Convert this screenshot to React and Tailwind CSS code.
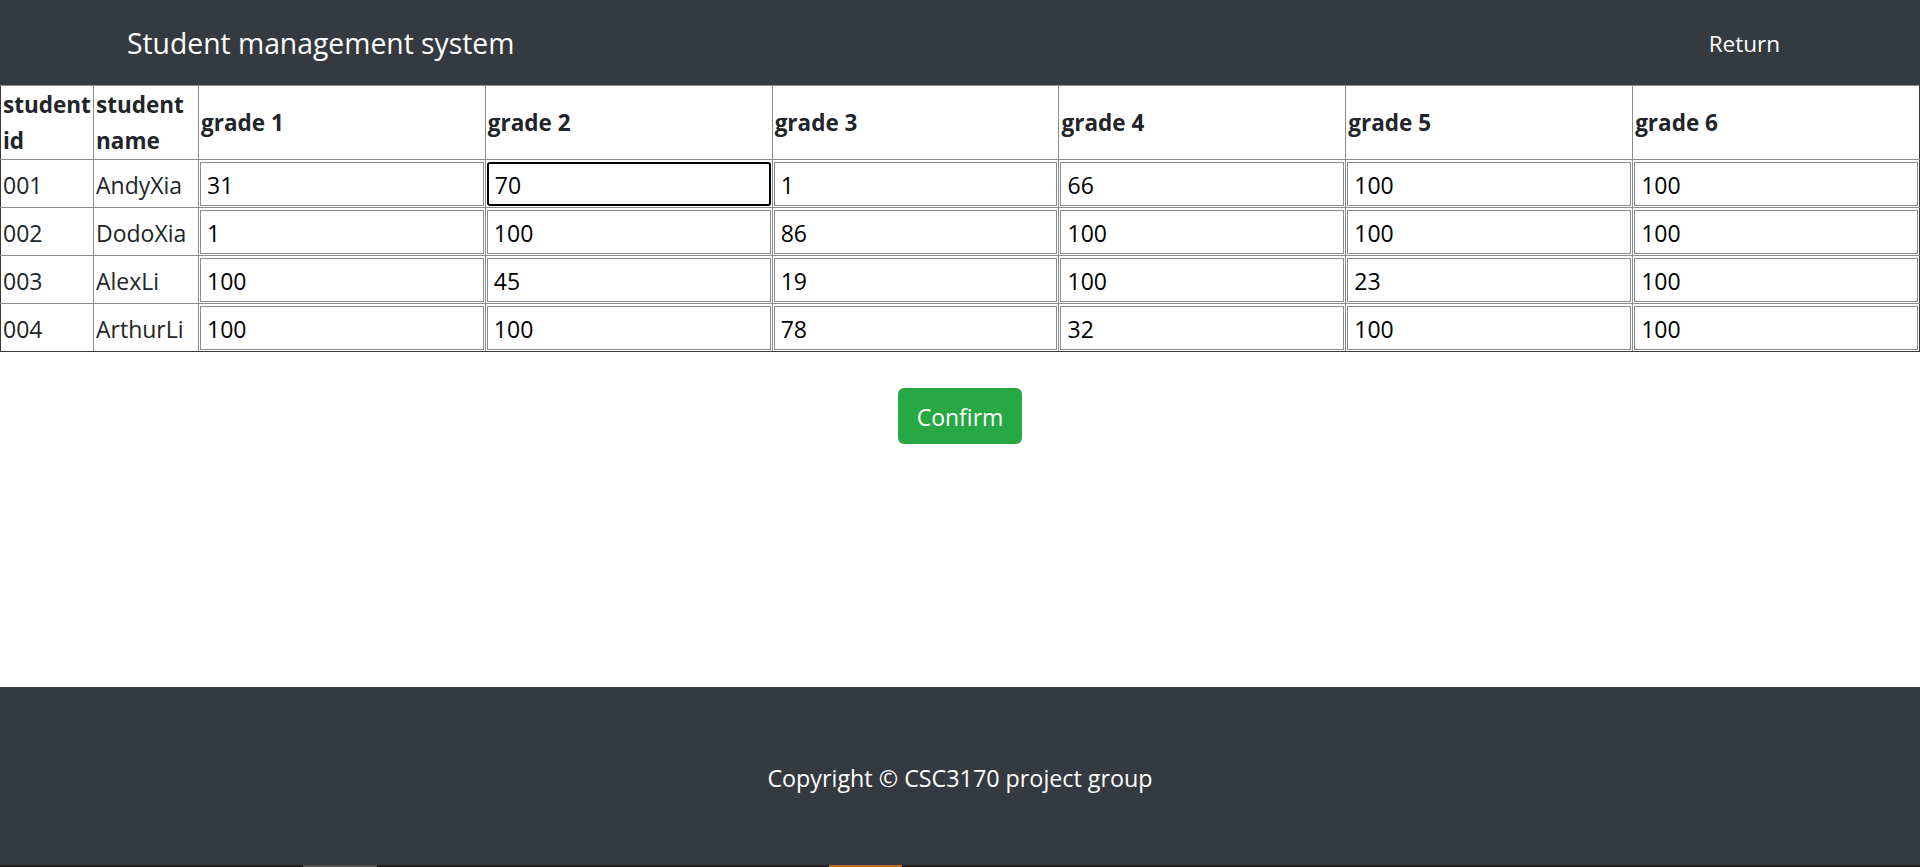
import { useEffect, useRef } from "react";

const students = [
	{ id: "001", name: "AndyXia", grades: ["31", "70", "1", "66", "100", "100"] },
	{ id: "002", name: "DodoXia", grades: ["1", "100", "86", "100", "100", "100"] },
	{ id: "003", name: "AlexLi", grades: ["100", "45", "19", "100", "23", "100"] },
	{ id: "004", name: "ArthurLi", grades: ["100", "100", "78", "32", "100", "100"] },
];

const font = "font-['Segoe_UI','Open_Sans','Noto_Sans',sans-serif]";

const Navbar = () => (
	<header className="h-[85px] bg-[#343a40] flex items-center justify-between pl-[127px] pr-[140px]">
		<span className="text-[28.3px] leading-[45px] text-white pt-[2px]">Student management system</span>
		<a href="#" className="text-[22.5px] leading-[36px] text-white pt-[2px]">
			Return
		</a>
	</header>
);

const GradeInput = ({ value, active }) => {
	const ref = useRef(null);

	useEffect(() => {
		if (active && ref.current) {
			ref.current.focus();
			ref.current.setSelectionRange(value.length, value.length);
		}
	}, [active, value]);

	return (
		<input
			ref={ref}
			type="text"
			defaultValue={value}
			className={`block w-full h-[44px] px-[6px] pt-[2px] text-[23px] text-black bg-white outline-none ${font} ${
				active
					? "border-2 border-black rounded-[3px]"
					: "border border-[#8a8a8a]"
			}`}
		/>
	);
};

const GradeTable = () => {
	const cell = "border border-[#8c8c8c] px-[2px] text-left align-middle";

	return (
		<table className="w-full table-fixed border-collapse text-[23px] leading-[36px] text-[#212529]">
			<colgroup>
				<col className="w-[93px]" />
				<col className="w-[105px]" />
				<col />
				<col />
				<col />
				<col />
				<col />
				<col />
			</colgroup>
			<thead>
				<tr className="h-[74px] text-[22.5px]">
					<th className={`${cell} border-l-[#3a3a3a] font-bold`}>
						student
						<br />
						id
					</th>
					<th className={`${cell} font-bold`}>
						student
						<br />
						name
					</th>
					{[1, 2, 3, 4, 5, 6].map((n) => (
						<th
							key={n}
							className={`${cell} font-bold ${n === 6 ? "border-r-[#3a3a3a]" : ""}`}
						>
							grade {n}
						</th>
					))}
				</tr>
			</thead>
			<tbody>
				{students.map((s, r) => {
					const last = r === students.length - 1;
					const bottom = last ? "border-b-[#3a3a3a]" : "";
					return (
						<tr key={s.id} className="h-[48px]">
							<td className={`${cell} ${bottom} border-l-[#3a3a3a] pt-[2px]`}>{s.id}</td>
							<td className={`${cell} ${bottom} pt-[2px]`}>{s.name}</td>
							{s.grades.map((g, i) => (
								<td
									key={i}
									className={`border border-[#8c8c8c] p-[1px] ${bottom} ${
										i === 5 ? "border-r-[#3a3a3a]" : ""
									}`}
								>
									<GradeInput value={g} active={r === 0 && i === 1} />
								</td>
							))}
						</tr>
					);
				})}
			</tbody>
		</table>
	);
};

const Footer = () => (
	<footer className="h-[180px] bg-[#343a40] flex flex-col">
		<div className="flex-1 flex items-center justify-center pt-[4px]">
			<p className="text-[23.3px] leading-[36px] text-white">Copyright © CSC3170 project group</p>
		</div>
		<div className="h-[2px] bg-[#202020] flex">
			<div className="w-[303px]" />
			<div className="w-[74px] bg-[#555]" />
			<div className="w-[452px]" />
			<div className="w-[73px] bg-[#c2691c]" />
		</div>
	</footer>
);

export default function App() {
	return (
		<div className={`min-h-[867px] flex flex-col bg-white ${font}`}>
			<Navbar />
			<main className="flex-1">
				<GradeTable />
				<div className="flex justify-center mt-[36px]">
					<button
						type="button"
						className="h-[56px] w-[124px] pt-[2px] rounded-[6px] bg-[#28a745] text-white text-[23px] leading-[36px]"
					>
						Confirm
					</button>
				</div>
			</main>
			<Footer />
		</div>
	);
}
